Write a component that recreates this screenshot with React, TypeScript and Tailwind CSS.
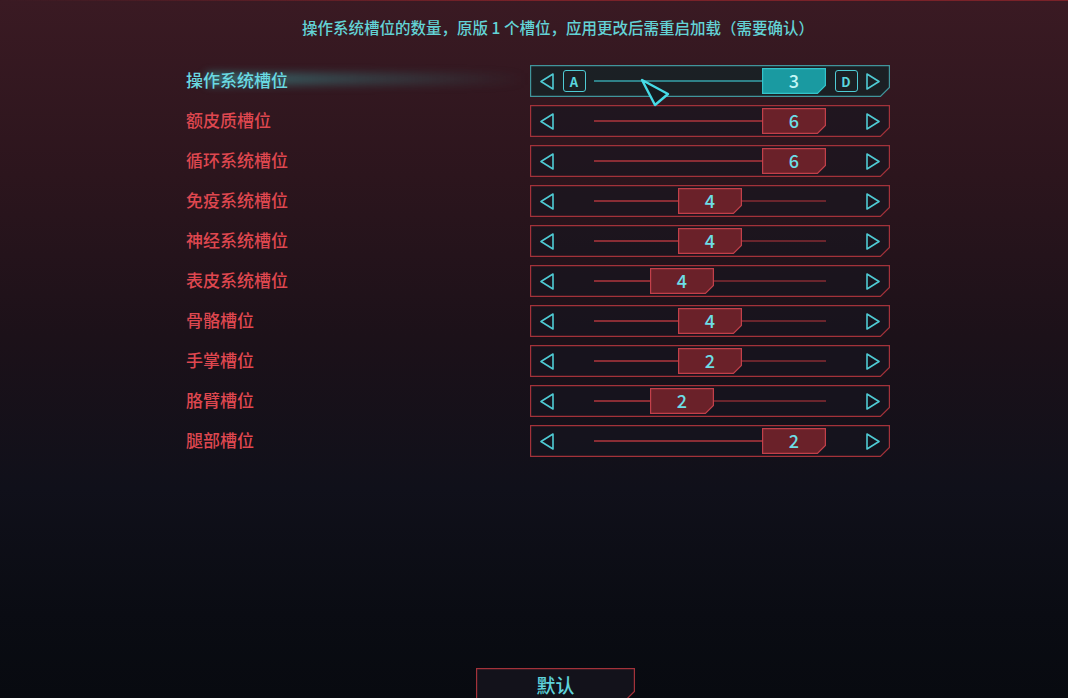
import type { CSSProperties, ReactNode } from "react";

type Slot = {
  label: string;
  value: number;
  pos: number; // 0..1 along the track
  active?: boolean;
};

const slots: Slot[] = [
  { label: "操作系统槽位", value: 3, pos: 1, active: true },
  { label: "额皮质槽位", value: 6, pos: 1 },
  { label: "循环系统槽位", value: 6, pos: 1 },
  { label: "免疫系统槽位", value: 4, pos: 0.5 },
  { label: "神经系统槽位", value: 4, pos: 0.5 },
  { label: "表皮系统槽位", value: 4, pos: 1 / 3 },
  { label: "骨骼槽位", value: 4, pos: 0.5 },
  { label: "手掌槽位", value: 2, pos: 0.5 },
  { label: "胳臂槽位", value: 2, pos: 1 / 3 },
  { label: "腿部槽位", value: 2, pos: 1 },
];

const TRACK_W = 232;
const THUMB_W = 64;

// frame with the bottom-right corner clipped off
function Frame({
  w,
  h,
  cut,
  stroke,
  fill,
  className,
  style,
  children,
}: {
  w: number;
  h: number;
  cut: number;
  stroke: string;
  fill: string;
  className?: string;
  style?: CSSProperties;
  children?: ReactNode;
}) {
  const pts = `0.6,0.6 ${w - 0.6},0.6 ${w - 0.6},${h - 0.6 - cut} ${w - 0.6 - cut},${h - 0.6} 0.6,${h - 0.6}`;
  return (
    <div className={"relative " + (className ?? "")} style={style}>
      <svg
        className="pointer-events-none absolute inset-0 h-full w-full"
        viewBox={`0 0 ${w} ${h}`}
        preserveAspectRatio="none"
      >
        <polygon points={pts} fill={fill} stroke={stroke} strokeWidth={1.2} />
      </svg>
      {children}
    </div>
  );
}

function Arrow({ dir }: { dir: "left" | "right" }) {
  const pts = dir === "left" ? "13,1 1,8.5 13,16" : "1,1 13,8.5 1,16";
  return (
    <svg width="14" height="17" viewBox="0 0 14 17" className="shrink-0">
      <polygon points={pts} fill="none" stroke="#4fcbd4" strokeWidth={1.6} strokeLinejoin="round" />
    </svg>
  );
}

function KeyCap({ k }: { k: string }) {
  return (
    <div className="flex h-[22px] w-[23px] items-center justify-center rounded-[3px] border-[1.5px] border-[#4fcbd4] text-[13px] font-bold leading-none text-[#5ad6de]">
      {k}
    </div>
  );
}

function Slider({ slot }: { slot: Slot }) {
  const left = slot.pos * (TRACK_W - THUMB_W);
  const on = slot.active;
  return (
    <Frame
      w={360}
      h={32}
      cut={9}
      stroke={on ? "#41959c" : "#a3323a"}
      fill={on ? "rgba(24,34,38,0.85)" : "rgba(22,22,32,0.6)"}
      className="h-8 w-[360px]"
    >
      <div className="relative flex h-full items-center px-[10px]">
        <Arrow dir="left" />
        <div className="flex w-[40px] justify-center">{on && <KeyCap k="A" />}</div>

        <div className="relative h-full w-[232px]">
          <div
            className={"absolute top-1/2 left-0 h-[2px] -translate-y-1/2 " + (on ? "bg-[#2f8188]" : "bg-[#8a2d35]")}
            style={{ width: left }}
          />
          <div
            className="absolute top-1/2 right-0 h-[2px] -translate-y-1/2 bg-[#6a252d]"
            style={{ width: TRACK_W - left - THUMB_W }}
          />
          <Frame
            w={64}
            h={26}
            cut={8}
            stroke={on ? "#34c4cb" : "#c2404a"}
            fill={on ? "#1a9aa1" : "#6a2129"}
            className="absolute top-[3px] h-[26px] w-[64px]"
            style={{ left }}
          >
            <div
              className={
                "relative flex h-full items-center justify-center pb-[3px] text-[18px] font-medium leading-none " +
                (on ? "text-[#c4f6f6]" : "text-[#6ddde6]")
              }
            >
              {slot.value}
            </div>
          </Frame>
        </div>

        <div className="flex w-[40px] justify-center">{on && <KeyCap k="D" />}</div>
        <Arrow dir="right" />
      </div>
      {on && (
        <svg
          width="34"
          height="34"
          viewBox="0 0 34 34"
          className="pointer-events-none absolute top-[11px] left-[108px] z-10"
        >
          <polygon points="4,4 30,18 17,29" fill="#161b1f" stroke="#46dbe6" strokeWidth={2.4} strokeLinejoin="round" />
        </svg>
      )}
    </Frame>
  );
}

function SlotRow({ slot }: { slot: Slot }) {
  return (
    <div className="flex h-8 items-center">
      <div className="relative flex h-full w-[344px] items-center">
        {slot.active && (
          <div className="absolute top-[14px] left-[20px] h-[12px] w-[320px] -translate-y-1/2 bg-linear-to-r from-[rgba(60,175,175,0.55)] via-[rgba(55,150,150,0.3)] to-transparent blur-[4px]" />
        )}
        <span
          className={
            "relative -mt-[4px] text-[17px] font-medium leading-none " +
            (slot.active ? "text-[#6ad9e2]" : "text-[#de474f]")
          }
        >
          {slot.label}
        </span>
      </div>
      <Slider slot={slot} />
    </div>
  );
}

export default function App() {
  return (
    <div
      className="flex h-[698px] w-full flex-col overflow-hidden bg-[linear-gradient(180deg,#3a1a23_0%,#2c151d_25%,#1c1119_48%,#10101a_70%,#0a0c13_88%,#080a10_100%)]"
      style={{ fontFamily: '"Noto Sans CJK SC", "Noto Sans", sans-serif' }}
    >
      {/* thin red rule along the top edge */}
      <div className="h-px w-full bg-linear-to-r from-transparent via-[#7a2229] to-[#7a2229]" />

      <div className="flex justify-center pt-[16px] pl-[48px]">
        <p className="text-[15.5px] font-medium leading-5 text-[#63d3d6]">
          操作系统槽位的数量，原版 1 个槽位，应用更改后需重启加载（需要确认）
        </p>
      </div>

      <div className="mt-[28px] flex flex-col gap-2 pl-[186px]">
        {slots.map((s) => (
          <SlotRow key={s.label} slot={s} />
        ))}
      </div>

      <div className="mt-auto mb-[-6px] flex justify-center pl-[43px]">
        <Frame w={159} h={36} cut={12} stroke="#a3323a" fill="#13121b" className="h-9 w-[159px]">
          <button className="relative flex h-full w-full items-center justify-center pb-[4px] text-[19px] font-medium leading-none text-[#5fd3dc]">
            默认
          </button>
        </Frame>
      </div>
    </div>
  );
}
